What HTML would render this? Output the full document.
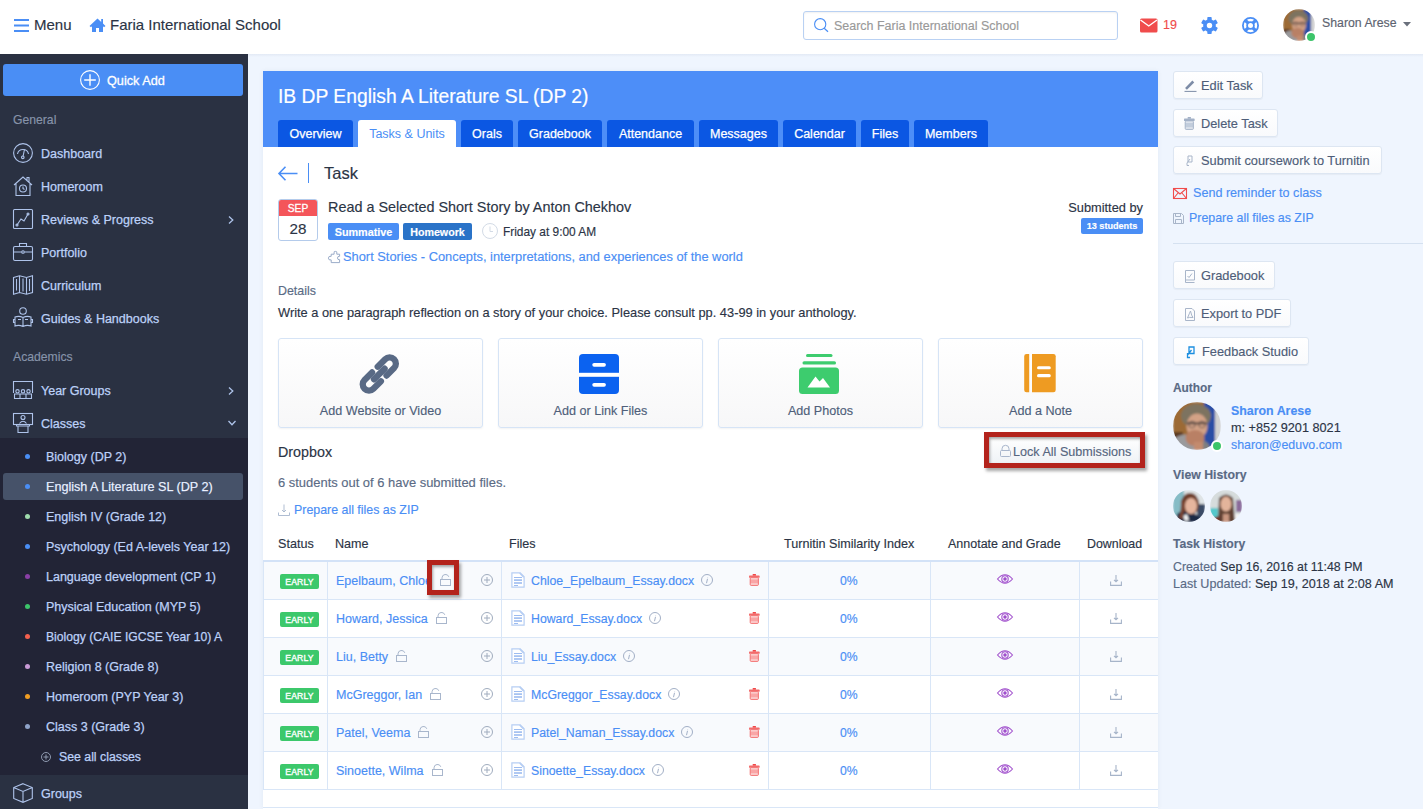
<!DOCTYPE html>
<html><head><meta charset="utf-8">
<style>
*{box-sizing:border-box;margin:0;padding:0}
html,body{width:1423px;height:809px;overflow:hidden;background:#eff5fe;font-family:"Liberation Sans",sans-serif;color:#2b3445;position:relative}
.a{position:absolute}
.t{position:absolute;white-space:nowrap;line-height:1;-webkit-text-stroke:0.15px currentColor}
svg{position:absolute;overflow:visible}
.sl{color:#bdd1f8;font-size:12.5px;-webkit-text-stroke:0.25px #bdd1f8}
.sec{color:#8794aa;font-size:12.2px}
.dot{position:absolute;width:5px;height:5px;border-radius:50%;left:25px}
.tab{position:absolute;top:120px;height:27px;background:#0b57e3;border-radius:3px 3px 0 0;color:#fff;font-size:12.5px;line-height:28px;text-align:center;-webkit-text-stroke:0.25px #fff}
.tab.on{background:#fff;color:#4a8ef5;-webkit-text-stroke:0}
.lnk{color:#4a8ef5}
.tile{position:absolute;top:338px;width:205px;height:90px;border:1px solid #d6e4f6;border-radius:3px;background:linear-gradient(#fff,#f7f7f8);box-shadow:0 1px 2px rgba(0,0,0,.05)}
.tile .t{color:#4f5f7a;font-size:12.6px;width:203px;text-align:center;left:0;top:66px}
.btn{position:absolute;left:1173px;height:28px;border:1px solid #dde6f2;border-radius:3px;background:linear-gradient(#fff,#f9fafc);box-shadow:0 1px 1px rgba(0,0,0,.04)}
.btn .t{color:#4e5d78;font-size:12.8px;top:8px}
.row{position:absolute;left:263px;width:895px;height:38px;border-bottom:1px solid #d9e6f7}
.row.s{background:#f8fafd}
.vl{position:absolute;top:0;width:1px;height:37px;background:#d9e6f7}
.early{position:absolute;left:17px;top:12px;width:39px;height:15px;background:#3cc86b;border-radius:2px;color:#fff;font-size:8.6px;font-weight:400;letter-spacing:0.15px;-webkit-text-stroke:0.35px #fff;text-align:center;line-height:16px}
.row .nm{left:73px;top:13px;font-size:12.5px;color:#4a8ef5}
.row .fn{left:268px;top:13px;font-size:12.3px;color:#4a8ef5}
.row .pc{left:586px;top:13px;font-size:12.2px;color:#4a8ef5;width:0;text-align:center}
</style></head><body>

<svg width="0" height="0" style="position:absolute"><defs>
<filter id="bl" x="-10%" y="-10%" width="120%" height="120%"><feGaussianBlur stdDeviation="1.3"/></filter><filter id="bl2" x="-10%" y="-10%" width="120%" height="120%"><feGaussianBlur stdDeviation="0.8"/></filter><clipPath id="cc"><circle cx="24" cy="24" r="24"/></clipPath>
<clipPath id="cs"><circle cx="16" cy="16" r="16"/></clipPath>
<g id="sharon"><g clip-path="url(#cc)"><g filter="url(#bl)">
<rect x="0" y="0" width="48" height="48" fill="#9c6a34"/>
<rect x="0" y="30" width="10" height="18" fill="#5b3a22"/>
<rect x="31" y="0" width="12" height="48" fill="#2c4ea5"/>
<rect x="42" y="0" width="6" height="48" fill="#d2d2d2"/>
<path d="M2 36 Q10 30 20 34 L26 48 H0 Z" fill="#9a9a9c"/>
<path d="M30 38 Q36 40 38 48 H28 Z" fill="#7f7f80"/>
<ellipse cx="23" cy="14" rx="15" ry="12" fill="#7d7360"/>
<ellipse cx="24" cy="24" rx="10.5" ry="12.5" fill="#d3a286"/>
<path d="M13.5 20 H34 V22.6 H13.5 Z" fill="#3e3534" opacity=".6"/><circle cx="19" cy="22.5" r="3.2" fill="none" stroke="#3e3534" stroke-width="1.2" opacity=".55"/><circle cx="29" cy="22.5" r="3.2" fill="none" stroke="#3e3534" stroke-width="1.2" opacity=".55"/>
<ellipse cx="22" cy="36" rx="9.5" ry="8" fill="#b98065"/>
<rect x="21" y="40" width="9" height="8" fill="#c38b6e"/>
</g></g></g>
<g id="av1"><g clip-path="url(#cs)"><g filter="url(#bl2)">
<rect width="32" height="32" fill="#dfe4e6"/>
<rect width="11" height="26" fill="#86bcc6"/>
<rect x="24" y="14" width="8" height="18" fill="#3a4c66"/>
<ellipse cx="17" cy="14" rx="9" ry="11" fill="#6e3e2a"/>
<path d="M4 24 Q10 18 16 24 Q24 22 28 30 V32 H3 Z" fill="#1e2a44"/>
<ellipse cx="18" cy="16" rx="6" ry="8" fill="#e6b59e"/>
<path d="M10 26 L14 24 L16 30 L12 31 Z" fill="#f2f2f2"/>
<path d="M8 10 Q8 26 5 28 L10 29 Q11 20 12 12 Z" fill="#7a4530"/>
</g></g></g>
<g id="av2"><g clip-path="url(#cs)"><g filter="url(#bl2)">
<rect width="32" height="32" fill="#d6dcdc"/>
<rect y="18" width="8" height="10" fill="#54c7cb"/>
<rect x="26" y="10" width="6" height="12" fill="#8a6a9a"/>
<rect x="22" y="24" width="10" height="8" fill="#f4f4f4"/>
<path d="M9 8 Q16 1 23 8 L25 32 H8 Z" fill="#5e4032"/>
<ellipse cx="16" cy="14" rx="5.5" ry="7.5" fill="#e3b49b"/>
<rect x="13" y="24" width="6" height="8" fill="#c99680"/>
<path d="M3 28 L9 26 L9 32 H3 Z" fill="#7a2a1e"/>
</g></g></g>
</defs></svg>
<!-- HEADER -->
<div class="a" style="left:0;top:0;width:1423px;height:54px;background:#fff"></div>
<div class="a" style="left:248px;top:54px;width:1175px;height:3px;background:linear-gradient(rgba(80,100,140,.08),rgba(80,100,140,0))"></div>
<svg style="left:14px;top:19px" width="15" height="13"><rect x="0" y="0" width="15" height="2" fill="#4a8ef5"/><rect x="0" y="5.5" width="15" height="2" fill="#4a8ef5"/><rect x="0" y="11" width="15" height="2" fill="#4a8ef5"/></svg>
<div class="t" style="left:34px;top:17px;font-size:15px;color:#2b3445">Menu</div>
<svg style="left:89px;top:18px" width="17" height="14" viewBox="0 0 17 14"><path d="M8.5 0.5 L0.5 8 L2 9.2 L3 8.3 V14 H7 V10 H10 V14 H14 V8.3 L15 9.2 L16.5 8 L14 5.6 V1 H12.2 V3.9 Z" fill="#4a8ef5"/></svg>
<div class="t" style="left:110px;top:17px;font-size:15px;color:#2b3445">Faria International School</div>
<div class="a" style="left:803px;top:11px;width:315px;height:29px;border:1px solid #b9d1f3;border-radius:3px;background:#fff;box-shadow:inset 0 1px 2px rgba(0,0,0,.06)"></div>
<svg style="left:814px;top:18px" width="15" height="14" viewBox="0 0 15 14"><circle cx="6.2" cy="6.2" r="5.6" fill="none" stroke="#4a8ef5" stroke-width="1.1"/><path d="M10.2 10.2 L14 13.8" stroke="#4a8ef5" stroke-width="1.2"/></svg>
<div class="t" style="left:834px;top:20px;font-size:12.48px;color:#999">Search Faria International School</div>
<svg style="left:1140px;top:18px" width="18" height="15" viewBox="0 0 18 15"><rect x="0" y="0.5" width="17.5" height="14" rx="1.5" fill="#f04c4c"/><path d="M0.5 2 L8.75 8 L17 2" fill="none" stroke="#fff" stroke-width="1.4"/></svg>
<div class="t" style="left:1163px;top:19px;font-size:12.5px;color:#f04c4c">19</div>
<svg style="left:1201px;top:17px" width="17" height="17" viewBox="0 0 17 17"><g fill="#4a8ef5"><circle cx="8.5" cy="8.5" r="6.3"/><rect x="6.3" y="0" width="4.4" height="17" rx="0.8"/><rect x="6.3" y="0" width="4.4" height="17" rx="0.8" transform="rotate(60 8.5 8.5)"/><rect x="6.3" y="0" width="4.4" height="17" rx="0.8" transform="rotate(120 8.5 8.5)"/></g><circle cx="8.5" cy="8.5" r="2.7" fill="#fff"/></svg>
<svg style="left:1242px;top:17px" width="17" height="17" viewBox="0 0 17 17"><circle cx="8.5" cy="8.5" r="7.6" fill="none" stroke="#4a8ef5" stroke-width="1.8"/><circle cx="8.5" cy="8.5" r="3.4" fill="none" stroke="#4a8ef5" stroke-width="1.8"/><path d="M3.3 3.3 L6.2 6.2 M13.7 3.3 L10.8 6.2 M3.3 13.7 L6.2 10.8 M13.7 13.7 L10.8 10.8" stroke="#4a8ef5" stroke-width="3.3"/></svg>
<svg style="left:1283px;top:9px" width="32" height="32" viewBox="0 0 48 48"><use href="#sharon"/></svg>
<div class="a" style="left:1305px;top:31px;width:12px;height:12px;border-radius:50%;background:#3cc46a;border:2px solid #fff"></div>
<div class="t" style="left:1322px;top:17px;font-size:12.3px;color:#5d6370">Sharon Arese</div>
<svg style="left:1403px;top:22px" width="8" height="5"><path d="M0 0 H8 L4 4.5 Z" fill="#6a707c"/></svg>

<!-- SIDEBAR -->
<div class="a" style="left:0;top:54px;width:248px;height:755px;background:#2a3142"></div>
<div class="a" style="left:3px;top:64px;width:240px;height:32px;background:#4a8ef5;border-radius:3px"></div>
<svg style="left:80px;top:70px" width="20" height="20" viewBox="0 0 20 20"><circle cx="10" cy="10" r="9.4" fill="none" stroke="#fff" stroke-width="1.1"/><path d="M10 4.2 V15.8 M4.2 10 H15.8" stroke="#fff" stroke-width="1.4"/></svg>
<div class="t" style="left:107px;top:75px;font-size:12.7px;color:#fff;-webkit-text-stroke:0.3px #fff">Quick Add</div>
<div class="t sec" style="left:13px;top:114px">General</div>

<svg style="left:13px;top:143px" width="20" height="20" viewBox="0 0 20 20" fill="none" stroke="#aec3ea" stroke-width="1.1"><circle cx="10" cy="10" r="9.4"/><path d="M4.5 11 A5.6 5.6 0 0 1 15.5 11"/><path d="M11.5 6.5 L10 13.5"/><circle cx="9.8" cy="14.3" r="1.3"/></svg>
<div class="t sl" style="left:41px;top:148px">Dashboard</div>
<svg style="left:13px;top:176px" width="20" height="20" viewBox="0 0 20 20" fill="none" stroke="#aec3ea" stroke-width="1.1"><path d="M1 9 L10 1 L19 9 M3 7.5 V19.5 H17 V7.5 M14 4 V1.5 H16 V6"/><circle cx="10" cy="12.5" r="3.5"/><path d="M10 10.5 V12.5 L11.5 13.5"/></svg>
<div class="t sl" style="left:41px;top:181px">Homeroom</div>
<svg style="left:13px;top:209px" width="20" height="20" viewBox="0 0 20 20" fill="none" stroke="#aec3ea" stroke-width="1.1"><rect x="0.5" y="0.5" width="19" height="19" rx="1"/><path d="M4 16 L8 10 L11 12 L15 5"/><circle cx="4" cy="16" r="1"/><circle cx="15" cy="5" r="1"/></svg>
<div class="t sl" style="left:41px;top:214px">Reviews &amp; Progress</div>
<svg style="left:228px;top:216px" width="6" height="8" viewBox="0 0 6 8" fill="none" stroke="#aec3ea" stroke-width="1.3"><path d="M1 0.5 L4.8 4 L1 7.5"/></svg>
<svg style="left:13px;top:242px" width="20" height="20" viewBox="0 0 20 20" fill="none" stroke="#aec3ea" stroke-width="1.1"><rect x="0.5" y="4.5" width="19" height="14" rx="1.5"/><path d="M6.5 4.5 V1.5 H13.5 V4.5 M0.5 10 H8.5 M11.5 10 H19.5"/><circle cx="10" cy="10" r="1.3"/></svg>
<div class="t sl" style="left:41px;top:247px">Portfolio</div>
<svg style="left:13px;top:275px" width="20" height="20" viewBox="0 0 20 20" fill="none" stroke="#aec3ea" stroke-width="1.1"><path d="M0.5 2.5 L6.5 0.8 L13.5 2.5 L19.5 0.8 V17.5 L13.5 19.2 L6.5 17.5 L0.5 19.2 Z M6.5 0.8 V17.5 M13.5 2.5 V19.2 M3.5 4 V15.5 M10 3.5 V16.5 M16.5 4 V16"/></svg>
<div class="t sl" style="left:41px;top:280px">Curriculum</div>
<svg style="left:13px;top:307px" width="20" height="21" viewBox="0 0 20 21" fill="none" stroke="#aec3ea" stroke-width="1.1"><circle cx="10" cy="4" r="3.3"/><path d="M2 10 Q6 8.5 10 10.5 Q14 8.5 18 10 V19 Q14 17.5 10 19.5 Q6 17.5 2 19 Z M10 10.5 V19.5 M2 12.5 H0.5 V15.5 H2 M18 12.5 H19.5 V15.5 H18 M5 12.5 H8 M12 12.5 H15"/></svg>
<div class="t sl" style="left:41px;top:313px">Guides &amp; Handbooks</div>

<div class="t sec" style="left:13px;top:351px">Academics</div>
<svg style="left:13px;top:381px" width="20" height="18" viewBox="0 0 20 18" fill="none" stroke="#aec3ea" stroke-width="1.1"><path d="M0.5 12 V0.5 H19.5 V12"/><circle cx="4.5" cy="10.3" r="1.7"/><circle cx="10" cy="10.3" r="1.7"/><circle cx="15.5" cy="10.3" r="1.7"/><path d="M1.5 13 H18.5 V17.5 H1.5 Z M7 13 V17.5 M13 13 V17.5"/></svg>
<div class="t sl" style="left:41px;top:385px">Year Groups</div>
<svg style="left:228px;top:387px" width="6" height="8" viewBox="0 0 6 8" fill="none" stroke="#aec3ea" stroke-width="1.3"><path d="M1 0.5 L4.8 4 L1 7.5"/></svg>
<svg style="left:13px;top:413px" width="20" height="20" viewBox="0 0 20 20" fill="none" stroke="#aec3ea" stroke-width="1.1"><rect x="0.5" y="0.5" width="19" height="11"/><circle cx="10" cy="4.5" r="2"/><path d="M6.5 10.5 Q10 6 13.5 10.5 M3.5 11.5 H16.5 V13 H3.5 Z M5 13 V19.5 H15 V13"/></svg>
<div class="t sl" style="left:41px;top:418px">Classes</div>
<svg style="left:228px;top:420px" width="8" height="6" viewBox="0 0 8 6" fill="none" stroke="#aec3ea" stroke-width="1.3"><path d="M0.5 1 L4 4.8 L7.5 1"/></svg>

<div class="a" style="left:0;top:438px;width:248px;height:337px;background:#222436"></div>
<div class="a" style="left:3px;top:473px;width:240px;height:27px;background:#465269;border-radius:3px"></div>
<div class="dot" style="top:454px;background:#4a8ef5"></div><div class="t sl" style="left:46px;top:451px">Biology (DP 2)</div>
<div class="dot" style="top:484px;background:#4a8ef5"></div><div class="t sl" style="left:46px;top:481px;color:#fff;font-size:12.6px">English A Literature SL (DP 2)</div>
<div class="dot" style="top:514px;background:#9fdcac"></div><div class="t sl" style="left:46px;top:511px">English IV (Grade 12)</div>
<div class="dot" style="top:544px;background:#4a8ef5"></div><div class="t sl" style="left:46px;top:541px">Psychology (Ed A-levels Year 12)</div>
<div class="dot" style="top:574px;background:#8a3fa6"></div><div class="t sl" style="left:46px;top:571px">Language development (CP 1)</div>
<div class="dot" style="top:604px;background:#3cc46a"></div><div class="t sl" style="left:46px;top:601px">Physical Education (MYP 5)</div>
<div class="dot" style="top:634px;background:#f4604e"></div><div class="t sl" style="left:46px;top:631px;font-size:12.15px">Biology (CAIE IGCSE Year 10) A</div>
<div class="dot" style="top:664px;background:#c99ad6"></div><div class="t sl" style="left:46px;top:661px">Religion 8 (Grade 8)</div>
<div class="dot" style="top:694px;background:#f19d22"></div><div class="t sl" style="left:46px;top:691px">Homeroom (PYP Year 3)</div>
<div class="dot" style="top:724px;background:#8fa3c9"></div><div class="t sl" style="left:46px;top:721px">Class 3 (Grade 3)</div>
<svg style="left:41px;top:752px" width="10" height="10" viewBox="0 0 10 10" fill="none" stroke="#8f9ab0" stroke-width="1"><circle cx="5" cy="5" r="4.5"/><path d="M5 2.5 V7.5 M2.5 5 H7.5"/></svg>
<div class="t sl" style="left:59px;top:751px;font-size:12.3px">See all classes</div>

<svg style="left:13px;top:783px" width="20" height="20" viewBox="0 0 20 20" fill="none" stroke="#aec3ea" stroke-width="1.1"><path d="M10 0.7 L19.3 4.5 V15.5 L10 19.3 L0.7 15.5 V4.5 Z M0.7 4.5 L10 8.5 L19.3 4.5 M10 8.5 V19.3"/></svg>
<div class="t sl" style="left:41px;top:788px">Groups</div>

<!-- CARD -->
<div class="a" style="left:263px;top:71px;width:895px;height:738px;background:#fff;box-shadow:0 0 5px rgba(40,60,100,.06)"></div>
<div class="a" style="left:263px;top:71px;width:895px;height:76px;background:#4d8ef8"></div>
<div class="t" style="left:278px;top:87px;font-size:19.3px;color:#fff;-webkit-text-stroke:0.2px #fff">IB DP English A Literature SL (DP 2)</div>
<div class="tab" style="left:278px;width:75px">Overview</div>
<div class="tab on" style="left:358px;width:98px">Tasks &amp; Units</div>
<div class="tab" style="left:461px;width:52px">Orals</div>
<div class="tab" style="left:518px;width:84px">Gradebook</div>
<div class="tab" style="left:607px;width:87px">Attendance</div>
<div class="tab" style="left:699px;width:79px">Messages</div>
<div class="tab" style="left:783px;width:73px">Calendar</div>
<div class="tab" style="left:861px;width:48px">Files</div>
<div class="tab" style="left:914px;width:74px">Members</div>

<svg style="left:278px;top:166px" width="20" height="15" viewBox="0 0 20 15" fill="none" stroke="#4a8ef5" stroke-width="1.6"><path d="M7.5 0.8 L1 7.5 L7.5 14.2 M1 7.5 H19.5"/></svg>
<div class="a" style="left:308px;top:163px;width:1px;height:20px;background:#4a8ef5"></div>
<div class="t" style="left:324px;top:165px;font-size:16.5px;color:#2b3445">Task</div>

<div class="a" style="left:278px;top:199px;width:40px;height:42px;border:1px solid #b4cbeb;border-radius:3px;background:#fff;overflow:hidden"><div class="a" style="left:-1px;top:-1px;width:40px;height:17px;background:#f4555a"></div></div>
<div class="t" style="left:278px;top:204px;width:40px;text-align:center;font-size:10.2px;color:#fff;-webkit-text-stroke:0.3px #fff">SEP</div>
<div class="t" style="left:278px;top:221px;width:40px;text-align:center;font-size:15.2px;color:#2b3445">28</div>
<div class="t" style="left:328px;top:200px;font-size:14.4px;color:#2b3445">Read a Selected Short Story by Anton Chekhov</div>
<div class="a" style="left:328px;top:223px;width:71px;height:17px;background:#4a8ef5;border-radius:2px"></div>
<div class="t" style="left:328px;top:227px;width:71px;text-align:center;font-size:10.8px;font-weight:700;color:#fff">Summative</div>
<div class="a" style="left:403px;top:223px;width:69px;height:17px;background:#2a73c8;border-radius:2px"></div>
<div class="t" style="left:403px;top:227px;width:69px;text-align:center;font-size:10.7px;font-weight:700;color:#fff">Homework</div>
<svg style="left:482px;top:223px" width="16" height="16" viewBox="0 0 16 16" fill="none" stroke="#d3dbe6" stroke-width="1"><circle cx="8" cy="8" r="7.5"/><path d="M8 3.5 V8.5 H11"/></svg>
<div class="t" style="left:503px;top:227px;font-size:11.9px;color:#2b3445">Friday at 9:00 AM</div>
<svg style="left:328px;top:251px" width="12" height="12" viewBox="0 0 12 12" fill="none" stroke="#8fa3c3" stroke-width="0.9"><path d="M3.2 3.2 H6.1 V1.8 Q5.5 0.4 7.4 0.4 Q9.3 0.4 8.8 1.8 V3.2 H11.6 V5.3 Q9.5 5 9.5 7 Q9.5 9 11.6 8.7 V11.6 H3.2 V8.9 Q0.4 9.5 0.4 7.1 Q0.4 4.8 3.2 5.3 Z"/></svg>
<div class="t" style="left:343px;top:251px;font-size:12.85px;color:#4a8ef5">Short Stories - Concepts, interpretations, and experiences of the world</div>
<div class="t" style="left:1143px;top:202px;font-size:12.8px;color:#2b3445;width:0;direction:rtl">Submitted by</div>
<div class="a" style="left:1081px;top:218px;width:62px;height:16px;background:#4a8ef5;border-radius:2px"></div>
<div class="t" style="left:1081px;top:222px;width:62px;text-align:center;font-size:9.1px;font-weight:700;color:#fff">13 students</div>

<div class="t" style="left:278px;top:285px;font-size:12.4px;color:#5a6b85">Details</div>
<div class="t" style="left:278px;top:307px;font-size:12.83px;color:#2b3445">Write a one paragraph reflection on a story of your choice. Please consult pp. 43-99 in your anthology.</div>

<div class="tile" style="left:278px"><svg style="left:80px;top:15px" width="40" height="40" viewBox="0 0 40 40" fill="none" stroke="#596a85" stroke-width="6.3" stroke-linecap="round"><g transform="translate(20.3 20) rotate(-45)"><path d="M4 -6.25 H14.6 A6.25 6.25 0 0 1 14.6 6.25 H4"/><path d="M-4 6.25 H-14.6 A6.25 6.25 0 0 1 -14.6 -6.25 H-4"/><path d="M-7.5 0 H7.5"/></g></svg><div class="t">Add Website or Video</div></div>
<div class="tile" style="left:498px"><svg style="left:80px;top:15px" width="40" height="40" viewBox="0 0 40 40"><rect x="0" y="0" width="40" height="40" rx="4" fill="#0b62f0"/><rect x="0" y="18.8" width="40" height="4" fill="#fff"/><rect x="13.3" y="9" width="13.6" height="3.7" rx="1.85" fill="#fff"/><rect x="13.3" y="29" width="13.6" height="3.7" rx="1.85" fill="#fff"/></svg><div class="t">Add or Link Files</div></div>
<div class="tile" style="left:718px"><svg style="left:80px;top:15px" width="40" height="40" viewBox="0 0 40 40"><rect x="7" y="0" width="26.5" height="3" rx="1.5" fill="#3dcc6e"/><rect x="3.5" y="7.2" width="33.5" height="3.3" rx="1.6" fill="#3dcc6e"/><rect x="0" y="13.5" width="40" height="26.5" rx="3.5" fill="#3dcc6e"/><path d="M8.5 33.5 L16.5 22.5 L20.5 27.5 L24 24 L31 33.5 Z" fill="#fff"/></svg><div class="t">Add Photos</div></div>
<div class="tile" style="left:938px"><svg style="left:84px;top:15px" width="34" height="40" viewBox="0 0 34 40"><path d="M3.5 0 H6.2 V38.3 H3.5 A2.3 2.3 0 0 1 1.2 36 V2.3 A2.3 2.3 0 0 1 3.5 0 Z" fill="#ee9b22"/><path d="M9 0 H30.4 A2.3 2.3 0 0 1 32.7 2.3 V36 A2.3 2.3 0 0 1 30.4 38.3 H9 Z" fill="#ee9b22"/><rect x="14" y="12.3" width="13.8" height="3" rx="1.5" fill="#fff"/><rect x="14" y="20.1" width="13.8" height="3.2" rx="1.6" fill="#fff"/></svg><div class="t">Add a Note</div></div>

<div class="t" style="left:278px;top:445px;font-size:14.3px;color:#2b3445">Dropbox</div>
<div class="a" style="left:988px;top:436px;width:153px;height:28px;border:1px solid #dde6f2;border-radius:3px;background:linear-gradient(#fff,#eff2f6)"></div>
<svg style="left:1000px;top:445px" width="11" height="12" viewBox="0 0 11 12" fill="none" stroke="#a8b6cc" stroke-width="1"><path d="M2 5.5 V3.8 A3.5 3.5 0 0 1 9 3.8 V5.5"/><rect x="0.5" y="5.5" width="10" height="6" rx="1"/></svg>
<div class="t" style="left:1013px;top:446px;font-size:12.6px;color:#56667f">Lock All Submissions</div>
<div class="a" style="left:984px;top:432px;width:161px;height:36px;border:5px solid #b3231c;box-shadow:2px 3px 3px rgba(0,0,0,.35), inset 1px 2px 3px rgba(0,0,0,.35)"></div>

<div class="t" style="left:278px;top:477px;font-size:12.94px;color:#5b6b85">6 students out of 6 have submitted files.</div>
<svg style="left:278px;top:504px" width="12" height="12" viewBox="0 0 12 12" fill="none" stroke="#a6b6cd" stroke-width="0.9"><path d="M6 0.5 V8 M4 6 L6 8 L8 6 M0.5 8.5 V11.5 H11.5 V8.5"/></svg>
<div class="t" style="left:294px;top:504px;font-size:12.4px;color:#4a8ef5">Prepare all files as ZIP</div>

<div class="t" style="left:278px;top:538px;font-size:12.6px;color:#2b3445">Status</div>
<div class="t" style="left:335px;top:538px;font-size:12.6px;color:#2b3445">Name</div>
<div class="t" style="left:509px;top:538px;font-size:12.6px;color:#2b3445">Files</div>
<div class="t" style="left:784px;top:538px;font-size:12.6px;color:#2b3445">Turnitin Similarity Index</div>
<div class="t" style="left:948px;top:538px;font-size:12.5px;color:#2b3445">Annotate and Grade</div>
<div class="t" style="left:1087px;top:538px;font-size:12.4px;color:#2b3445">Download</div>
<div class="a" style="left:263px;top:560px;width:895px;height:2px;background:#d3e2f7"></div>

<div class="row s" style="top:562px">
<div class="vl" style="left:0"></div><div class="vl" style="left:64px"></div><div class="vl" style="left:238px"></div><div class="vl" style="left:505px"></div><div class="vl" style="left:667px"></div><div class="vl" style="left:816px"></div>
<div class="early">EARLY</div>
<div class="t nm">Epelbaum, Chloe</div>
<svg style="left:177px;top:12px" width="11" height="12" viewBox="0 0 11 12" fill="none" stroke="#a8b6cc" stroke-width="1"><path d="M2 5.5 V3.8 A3.5 3.5 0 0 1 8.8 2.8"/><rect x="0.5" y="5.5" width="10" height="6"/></svg>
<svg style="left:218px;top:12px" width="12" height="12" viewBox="0 0 12 12" fill="none" stroke="#a0acbe" stroke-width="1"><circle cx="6" cy="6" r="5.5"/><path d="M6 3 V9 M3 6 H9"/></svg>
<svg style="left:248px;top:10px" width="14" height="16" viewBox="0 0 14 16"><path d="M0.9 0.9 H9.2 L13.1 4.8 V15.1 H0.9 Z" fill="#fff" stroke="#b6cef3" stroke-width="1.2"/><path d="M8.6 1 L12.8 5.2" stroke="#b6cef3" stroke-width="1.4"/><rect x="3" y="5" width="8" height="1" fill="#9dbcf0"/><rect x="3" y="7.3" width="8" height="1.6" fill="#9dbcf0"/><rect x="3" y="10.2" width="8" height="1.6" fill="#9dbcf0"/><rect x="3" y="13" width="4" height="1" fill="#9dbcf0"/></svg>
<div class="t fn">Chloe_Epelbaum_Essay.docx</div>
<svg style="left:438px;top:12px" width="12" height="12" viewBox="0 0 12 12" fill="none" stroke="#97a6bf" stroke-width="0.9"><circle cx="6" cy="6" r="5.5"/><path d="M6.5 4.8 L5.5 9.2 M6.6 3 V3.3"/></svg>
<svg style="left:486px;top:12px" width="11" height="12" viewBox="0 0 11 12"><rect x="3.6" y="0" width="3.4" height="1.8" rx="0.5" fill="#f04848"/><rect x="0" y="1.6" width="10.6" height="2.2" rx="0.6" fill="#f26b6b"/><rect x="1.2" y="3.8" width="8.2" height="7.6" rx="1" fill="#f9a6a6" stroke="#f26a6a" stroke-width="0.9"/><rect x="1.8" y="4.4" width="7" height="0.9" fill="#fff" opacity=".85"/><rect x="1.8" y="9.6" width="7" height="0.9" fill="#fff" opacity=".85"/></svg>
<div class="t pc" style="left:586px;width:0"><span style="position:absolute;left:-9px">0%</span></div>
<svg style="left:734px;top:11px" width="16" height="12" viewBox="0 0 16 12" fill="none" stroke="#a04fcc" stroke-width="1.1"><path d="M0.5 6 Q8 -2.5 15.5 6 Q8 14.5 0.5 6 Z"/><circle cx="8" cy="6" r="3.2"/><circle cx="8" cy="6" r="1.2" fill="#a04fcc"/></svg>
<svg style="left:847px;top:13px" width="12" height="11" viewBox="0 0 12 11" fill="none" stroke="#a6b4c9" stroke-width="1.1"><path d="M6 0 V6.8 M4 4.8 L6 6.8 L8 4.8 M0.6 6.5 V10.4 H11.4 V6.5"/></svg>
</div>
<div class="row" style="top:600px">
<div class="vl" style="left:0"></div><div class="vl" style="left:64px"></div><div class="vl" style="left:238px"></div><div class="vl" style="left:505px"></div><div class="vl" style="left:667px"></div><div class="vl" style="left:816px"></div>
<div class="early">EARLY</div>
<div class="t nm">Howard, Jessica</div>
<svg style="left:173px;top:12px" width="11" height="12" viewBox="0 0 11 12" fill="none" stroke="#a8b6cc" stroke-width="1"><path d="M2 5.5 V3.8 A3.5 3.5 0 0 1 8.8 2.8"/><rect x="0.5" y="5.5" width="10" height="6"/></svg>
<svg style="left:218px;top:12px" width="12" height="12" viewBox="0 0 12 12" fill="none" stroke="#a0acbe" stroke-width="1"><circle cx="6" cy="6" r="5.5"/><path d="M6 3 V9 M3 6 H9"/></svg>
<svg style="left:248px;top:10px" width="14" height="16" viewBox="0 0 14 16"><path d="M0.9 0.9 H9.2 L13.1 4.8 V15.1 H0.9 Z" fill="#fff" stroke="#b6cef3" stroke-width="1.2"/><path d="M8.6 1 L12.8 5.2" stroke="#b6cef3" stroke-width="1.4"/><rect x="3" y="5" width="8" height="1" fill="#9dbcf0"/><rect x="3" y="7.3" width="8" height="1.6" fill="#9dbcf0"/><rect x="3" y="10.2" width="8" height="1.6" fill="#9dbcf0"/><rect x="3" y="13" width="4" height="1" fill="#9dbcf0"/></svg>
<div class="t fn">Howard_Essay.docx</div>
<svg style="left:386px;top:12px" width="12" height="12" viewBox="0 0 12 12" fill="none" stroke="#97a6bf" stroke-width="0.9"><circle cx="6" cy="6" r="5.5"/><path d="M6.5 4.8 L5.5 9.2 M6.6 3 V3.3"/></svg>
<svg style="left:486px;top:12px" width="11" height="12" viewBox="0 0 11 12"><rect x="3.6" y="0" width="3.4" height="1.8" rx="0.5" fill="#f04848"/><rect x="0" y="1.6" width="10.6" height="2.2" rx="0.6" fill="#f26b6b"/><rect x="1.2" y="3.8" width="8.2" height="7.6" rx="1" fill="#f9a6a6" stroke="#f26a6a" stroke-width="0.9"/><rect x="1.8" y="4.4" width="7" height="0.9" fill="#fff" opacity=".85"/><rect x="1.8" y="9.6" width="7" height="0.9" fill="#fff" opacity=".85"/></svg>
<div class="t pc" style="left:586px;width:0"><span style="position:absolute;left:-9px">0%</span></div>
<svg style="left:734px;top:11px" width="16" height="12" viewBox="0 0 16 12" fill="none" stroke="#a04fcc" stroke-width="1.1"><path d="M0.5 6 Q8 -2.5 15.5 6 Q8 14.5 0.5 6 Z"/><circle cx="8" cy="6" r="3.2"/><circle cx="8" cy="6" r="1.2" fill="#a04fcc"/></svg>
<svg style="left:847px;top:13px" width="12" height="11" viewBox="0 0 12 11" fill="none" stroke="#a6b4c9" stroke-width="1.1"><path d="M6 0 V6.8 M4 4.8 L6 6.8 L8 4.8 M0.6 6.5 V10.4 H11.4 V6.5"/></svg>
</div>
<div class="row s" style="top:638px">
<div class="vl" style="left:0"></div><div class="vl" style="left:64px"></div><div class="vl" style="left:238px"></div><div class="vl" style="left:505px"></div><div class="vl" style="left:667px"></div><div class="vl" style="left:816px"></div>
<div class="early">EARLY</div>
<div class="t nm">Liu, Betty</div>
<svg style="left:133px;top:12px" width="11" height="12" viewBox="0 0 11 12" fill="none" stroke="#a8b6cc" stroke-width="1"><path d="M2 5.5 V3.8 A3.5 3.5 0 0 1 8.8 2.8"/><rect x="0.5" y="5.5" width="10" height="6"/></svg>
<svg style="left:218px;top:12px" width="12" height="12" viewBox="0 0 12 12" fill="none" stroke="#a0acbe" stroke-width="1"><circle cx="6" cy="6" r="5.5"/><path d="M6 3 V9 M3 6 H9"/></svg>
<svg style="left:248px;top:10px" width="14" height="16" viewBox="0 0 14 16"><path d="M0.9 0.9 H9.2 L13.1 4.8 V15.1 H0.9 Z" fill="#fff" stroke="#b6cef3" stroke-width="1.2"/><path d="M8.6 1 L12.8 5.2" stroke="#b6cef3" stroke-width="1.4"/><rect x="3" y="5" width="8" height="1" fill="#9dbcf0"/><rect x="3" y="7.3" width="8" height="1.6" fill="#9dbcf0"/><rect x="3" y="10.2" width="8" height="1.6" fill="#9dbcf0"/><rect x="3" y="13" width="4" height="1" fill="#9dbcf0"/></svg>
<div class="t fn">Liu_Essay.docx</div>
<svg style="left:360px;top:12px" width="12" height="12" viewBox="0 0 12 12" fill="none" stroke="#97a6bf" stroke-width="0.9"><circle cx="6" cy="6" r="5.5"/><path d="M6.5 4.8 L5.5 9.2 M6.6 3 V3.3"/></svg>
<svg style="left:486px;top:12px" width="11" height="12" viewBox="0 0 11 12"><rect x="3.6" y="0" width="3.4" height="1.8" rx="0.5" fill="#f04848"/><rect x="0" y="1.6" width="10.6" height="2.2" rx="0.6" fill="#f26b6b"/><rect x="1.2" y="3.8" width="8.2" height="7.6" rx="1" fill="#f9a6a6" stroke="#f26a6a" stroke-width="0.9"/><rect x="1.8" y="4.4" width="7" height="0.9" fill="#fff" opacity=".85"/><rect x="1.8" y="9.6" width="7" height="0.9" fill="#fff" opacity=".85"/></svg>
<div class="t pc" style="left:586px;width:0"><span style="position:absolute;left:-9px">0%</span></div>
<svg style="left:734px;top:11px" width="16" height="12" viewBox="0 0 16 12" fill="none" stroke="#a04fcc" stroke-width="1.1"><path d="M0.5 6 Q8 -2.5 15.5 6 Q8 14.5 0.5 6 Z"/><circle cx="8" cy="6" r="3.2"/><circle cx="8" cy="6" r="1.2" fill="#a04fcc"/></svg>
<svg style="left:847px;top:13px" width="12" height="11" viewBox="0 0 12 11" fill="none" stroke="#a6b4c9" stroke-width="1.1"><path d="M6 0 V6.8 M4 4.8 L6 6.8 L8 4.8 M0.6 6.5 V10.4 H11.4 V6.5"/></svg>
</div>
<div class="row" style="top:676px">
<div class="vl" style="left:0"></div><div class="vl" style="left:64px"></div><div class="vl" style="left:238px"></div><div class="vl" style="left:505px"></div><div class="vl" style="left:667px"></div><div class="vl" style="left:816px"></div>
<div class="early">EARLY</div>
<div class="t nm">McGreggor, Ian</div>
<svg style="left:167px;top:12px" width="11" height="12" viewBox="0 0 11 12" fill="none" stroke="#a8b6cc" stroke-width="1"><path d="M2 5.5 V3.8 A3.5 3.5 0 0 1 8.8 2.8"/><rect x="0.5" y="5.5" width="10" height="6"/></svg>
<svg style="left:218px;top:12px" width="12" height="12" viewBox="0 0 12 12" fill="none" stroke="#a0acbe" stroke-width="1"><circle cx="6" cy="6" r="5.5"/><path d="M6 3 V9 M3 6 H9"/></svg>
<svg style="left:248px;top:10px" width="14" height="16" viewBox="0 0 14 16"><path d="M0.9 0.9 H9.2 L13.1 4.8 V15.1 H0.9 Z" fill="#fff" stroke="#b6cef3" stroke-width="1.2"/><path d="M8.6 1 L12.8 5.2" stroke="#b6cef3" stroke-width="1.4"/><rect x="3" y="5" width="8" height="1" fill="#9dbcf0"/><rect x="3" y="7.3" width="8" height="1.6" fill="#9dbcf0"/><rect x="3" y="10.2" width="8" height="1.6" fill="#9dbcf0"/><rect x="3" y="13" width="4" height="1" fill="#9dbcf0"/></svg>
<div class="t fn">McGreggor_Essay.docx</div>
<svg style="left:405px;top:12px" width="12" height="12" viewBox="0 0 12 12" fill="none" stroke="#97a6bf" stroke-width="0.9"><circle cx="6" cy="6" r="5.5"/><path d="M6.5 4.8 L5.5 9.2 M6.6 3 V3.3"/></svg>
<svg style="left:486px;top:12px" width="11" height="12" viewBox="0 0 11 12"><rect x="3.6" y="0" width="3.4" height="1.8" rx="0.5" fill="#f04848"/><rect x="0" y="1.6" width="10.6" height="2.2" rx="0.6" fill="#f26b6b"/><rect x="1.2" y="3.8" width="8.2" height="7.6" rx="1" fill="#f9a6a6" stroke="#f26a6a" stroke-width="0.9"/><rect x="1.8" y="4.4" width="7" height="0.9" fill="#fff" opacity=".85"/><rect x="1.8" y="9.6" width="7" height="0.9" fill="#fff" opacity=".85"/></svg>
<div class="t pc" style="left:586px;width:0"><span style="position:absolute;left:-9px">0%</span></div>
<svg style="left:734px;top:11px" width="16" height="12" viewBox="0 0 16 12" fill="none" stroke="#a04fcc" stroke-width="1.1"><path d="M0.5 6 Q8 -2.5 15.5 6 Q8 14.5 0.5 6 Z"/><circle cx="8" cy="6" r="3.2"/><circle cx="8" cy="6" r="1.2" fill="#a04fcc"/></svg>
<svg style="left:847px;top:13px" width="12" height="11" viewBox="0 0 12 11" fill="none" stroke="#a6b4c9" stroke-width="1.1"><path d="M6 0 V6.8 M4 4.8 L6 6.8 L8 4.8 M0.6 6.5 V10.4 H11.4 V6.5"/></svg>
</div>
<div class="row s" style="top:714px">
<div class="vl" style="left:0"></div><div class="vl" style="left:64px"></div><div class="vl" style="left:238px"></div><div class="vl" style="left:505px"></div><div class="vl" style="left:667px"></div><div class="vl" style="left:816px"></div>
<div class="early">EARLY</div>
<div class="t nm">Patel, Veema</div>
<svg style="left:155px;top:12px" width="11" height="12" viewBox="0 0 11 12" fill="none" stroke="#a8b6cc" stroke-width="1"><path d="M2 5.5 V3.8 A3.5 3.5 0 0 1 8.8 2.8"/><rect x="0.5" y="5.5" width="10" height="6"/></svg>
<svg style="left:218px;top:12px" width="12" height="12" viewBox="0 0 12 12" fill="none" stroke="#a0acbe" stroke-width="1"><circle cx="6" cy="6" r="5.5"/><path d="M6 3 V9 M3 6 H9"/></svg>
<svg style="left:248px;top:10px" width="14" height="16" viewBox="0 0 14 16"><path d="M0.9 0.9 H9.2 L13.1 4.8 V15.1 H0.9 Z" fill="#fff" stroke="#b6cef3" stroke-width="1.2"/><path d="M8.6 1 L12.8 5.2" stroke="#b6cef3" stroke-width="1.4"/><rect x="3" y="5" width="8" height="1" fill="#9dbcf0"/><rect x="3" y="7.3" width="8" height="1.6" fill="#9dbcf0"/><rect x="3" y="10.2" width="8" height="1.6" fill="#9dbcf0"/><rect x="3" y="13" width="4" height="1" fill="#9dbcf0"/></svg>
<div class="t fn">Patel_Naman_Essay.docx</div>
<svg style="left:418px;top:12px" width="12" height="12" viewBox="0 0 12 12" fill="none" stroke="#97a6bf" stroke-width="0.9"><circle cx="6" cy="6" r="5.5"/><path d="M6.5 4.8 L5.5 9.2 M6.6 3 V3.3"/></svg>
<svg style="left:486px;top:12px" width="11" height="12" viewBox="0 0 11 12"><rect x="3.6" y="0" width="3.4" height="1.8" rx="0.5" fill="#f04848"/><rect x="0" y="1.6" width="10.6" height="2.2" rx="0.6" fill="#f26b6b"/><rect x="1.2" y="3.8" width="8.2" height="7.6" rx="1" fill="#f9a6a6" stroke="#f26a6a" stroke-width="0.9"/><rect x="1.8" y="4.4" width="7" height="0.9" fill="#fff" opacity=".85"/><rect x="1.8" y="9.6" width="7" height="0.9" fill="#fff" opacity=".85"/></svg>
<div class="t pc" style="left:586px;width:0"><span style="position:absolute;left:-9px">0%</span></div>
<svg style="left:734px;top:11px" width="16" height="12" viewBox="0 0 16 12" fill="none" stroke="#a04fcc" stroke-width="1.1"><path d="M0.5 6 Q8 -2.5 15.5 6 Q8 14.5 0.5 6 Z"/><circle cx="8" cy="6" r="3.2"/><circle cx="8" cy="6" r="1.2" fill="#a04fcc"/></svg>
<svg style="left:847px;top:13px" width="12" height="11" viewBox="0 0 12 11" fill="none" stroke="#a6b4c9" stroke-width="1.1"><path d="M6 0 V6.8 M4 4.8 L6 6.8 L8 4.8 M0.6 6.5 V10.4 H11.4 V6.5"/></svg>
</div>
<div class="row" style="top:752px">
<div class="vl" style="left:0"></div><div class="vl" style="left:64px"></div><div class="vl" style="left:238px"></div><div class="vl" style="left:505px"></div><div class="vl" style="left:667px"></div><div class="vl" style="left:816px"></div>
<div class="early">EARLY</div>
<div class="t nm">Sinoette, Wilma</div>
<svg style="left:169px;top:12px" width="11" height="12" viewBox="0 0 11 12" fill="none" stroke="#a8b6cc" stroke-width="1"><path d="M2 5.5 V3.8 A3.5 3.5 0 0 1 8.8 2.8"/><rect x="0.5" y="5.5" width="10" height="6"/></svg>
<svg style="left:218px;top:12px" width="12" height="12" viewBox="0 0 12 12" fill="none" stroke="#a0acbe" stroke-width="1"><circle cx="6" cy="6" r="5.5"/><path d="M6 3 V9 M3 6 H9"/></svg>
<svg style="left:248px;top:10px" width="14" height="16" viewBox="0 0 14 16"><path d="M0.9 0.9 H9.2 L13.1 4.8 V15.1 H0.9 Z" fill="#fff" stroke="#b6cef3" stroke-width="1.2"/><path d="M8.6 1 L12.8 5.2" stroke="#b6cef3" stroke-width="1.4"/><rect x="3" y="5" width="8" height="1" fill="#9dbcf0"/><rect x="3" y="7.3" width="8" height="1.6" fill="#9dbcf0"/><rect x="3" y="10.2" width="8" height="1.6" fill="#9dbcf0"/><rect x="3" y="13" width="4" height="1" fill="#9dbcf0"/></svg>
<div class="t fn">Sinoette_Essay.docx</div>
<svg style="left:389px;top:12px" width="12" height="12" viewBox="0 0 12 12" fill="none" stroke="#97a6bf" stroke-width="0.9"><circle cx="6" cy="6" r="5.5"/><path d="M6.5 4.8 L5.5 9.2 M6.6 3 V3.3"/></svg>
<svg style="left:486px;top:12px" width="11" height="12" viewBox="0 0 11 12"><rect x="3.6" y="0" width="3.4" height="1.8" rx="0.5" fill="#f04848"/><rect x="0" y="1.6" width="10.6" height="2.2" rx="0.6" fill="#f26b6b"/><rect x="1.2" y="3.8" width="8.2" height="7.6" rx="1" fill="#f9a6a6" stroke="#f26a6a" stroke-width="0.9"/><rect x="1.8" y="4.4" width="7" height="0.9" fill="#fff" opacity=".85"/><rect x="1.8" y="9.6" width="7" height="0.9" fill="#fff" opacity=".85"/></svg>
<div class="t pc" style="left:586px;width:0"><span style="position:absolute;left:-9px">0%</span></div>
<svg style="left:734px;top:11px" width="16" height="12" viewBox="0 0 16 12" fill="none" stroke="#a04fcc" stroke-width="1.1"><path d="M0.5 6 Q8 -2.5 15.5 6 Q8 14.5 0.5 6 Z"/><circle cx="8" cy="6" r="3.2"/><circle cx="8" cy="6" r="1.2" fill="#a04fcc"/></svg>
<svg style="left:847px;top:13px" width="12" height="11" viewBox="0 0 12 11" fill="none" stroke="#a6b4c9" stroke-width="1.1"><path d="M6 0 V6.8 M4 4.8 L6 6.8 L8 4.8 M0.6 6.5 V10.4 H11.4 V6.5"/></svg>
</div>
<div class="a" style="left:263px;top:790px;width:895px;height:18px;border-bottom:1px solid #d9e6f7"></div>

<div class="a" style="left:427px;top:560px;width:32px;height:35px;border:5px solid #b3231c;box-shadow:2px 3px 3px rgba(0,0,0,.35), inset 1px 2px 3px rgba(0,0,0,.35)"></div>
<!-- RIGHT PANEL -->
<div class="btn" style="top:71px;width:90px"><svg style="left:10px;top:7px" width="13" height="13" viewBox="0 0 13 13" fill="none" stroke="#7d8ca6"><path d="M2 9.8 L9.3 2.5" stroke-width="2.6"/><path d="M0.5 12.4 H12.5" stroke-width="1"/></svg><div class="t" style="left:27px">Edit Task</div></div>
<div class="btn" style="top:109px;width:105px"><svg style="left:10px;top:7px" width="11" height="13" viewBox="0 0 11 13"><rect x="3.6" y="0" width="3.4" height="1.8" rx="0.5" fill="#a3b1c7"/><rect x="0" y="1.6" width="10.6" height="2.4" rx="0.6" fill="#a3b1c7"/><rect x="1.2" y="4" width="8.2" height="8.4" rx="1" fill="#c2cddc" stroke="#a3b1c7" stroke-width="0.9"/><rect x="1.8" y="4.6" width="7" height="0.9" fill="#fff" opacity=".85"/><rect x="1.8" y="10.6" width="7" height="0.9" fill="#fff" opacity=".85"/></svg><div class="t" style="left:27px">Delete Task</div></div>
<div class="btn" style="top:146px;width:209px"><svg style="left:10px;top:8px" width="12" height="12" viewBox="0 0 12 12" fill="none" stroke="#a8b5c9" stroke-width="1"><path d="M4 1 H8 V7 H4 Z M6 4 L3 8 M3 8 V10.5 H5"/></svg><div class="t" style="left:27px">Submit coursework to Turnitin</div></div>
<svg style="left:1173px;top:188px" width="14" height="11" viewBox="0 0 14 11" fill="none" stroke="#f04c4c" stroke-width="1.1"><rect x="0.5" y="0.5" width="13" height="10"/><path d="M0.5 0.5 L7 6 L13.5 0.5 M0.5 10.5 L5 5 M13.5 10.5 L9 5"/></svg>
<div class="t" style="left:1193px;top:187px;font-size:12.6px;color:#4a8ef5">Send reminder to class</div>
<svg style="left:1173px;top:213px" width="11" height="11" viewBox="0 0 11 11" fill="none" stroke="#a8b5c9" stroke-width="1"><path d="M0.5 0.5 H8.5 L10.5 2.5 V10.5 H0.5 Z M2.5 0.5 V3.5 H7.5 V0.5 M2.5 10.5 V6.5 H8.5 V10.5"/></svg>
<div class="t" style="left:1189px;top:212px;font-size:12.4px;color:#4a8ef5">Prepare all files as ZIP</div>
<div class="a" style="left:1173px;top:243px;width:250px;height:1px;background:#d5e1f0"></div>
<div class="btn" style="top:261px;width:102px"><svg style="left:10px;top:8px" width="12" height="13" viewBox="0 0 12 13" fill="none" stroke="#a8b5c9" stroke-width="1"><path d="M1.5 0.5 H10.5 V10 H1.5 Z M1.5 10 V12.5 H10.5 M3.5 6 L5 7.5 L8 3.5"/></svg><div class="t" style="left:27px">Gradebook</div></div>
<div class="btn" style="top:299px;width:118px"><svg style="left:10px;top:8px" width="12" height="13" viewBox="0 0 12 13" fill="none" stroke="#a8b5c9" stroke-width="1"><path d="M1.5 0.5 H8 L10.5 3 V12.5 H1.5 Z M3.5 10 Q6 4 6.5 3 Q7.5 8 9 9.5 Q5 9 3.5 10"/></svg><div class="t" style="left:27px">Export to PDF</div></div>
<div class="btn" style="top:337px;width:136px"><svg style="left:11px;top:8px" width="12" height="13" viewBox="0 0 12 13" fill="none" stroke="#1d8fe0" stroke-width="1.3"><path d="M4 1 H9 V7.5 H4 Z M6.5 4 L2.5 9 M2.5 7 V11.5 H5"/></svg><div class="t" style="left:28px">Feedback Studio</div></div>

<div class="t" style="left:1173px;top:383px;font-size:11.9px;font-weight:700;color:#5a6a85">Author</div>
<svg style="left:1173px;top:402px" width="48" height="48" viewBox="0 0 48 48"><use href="#sharon"/></svg>
<div class="a" style="left:1211px;top:440px;width:12px;height:12px;border-radius:50%;background:#3cc46a;border:2px solid #fff"></div>
<div class="t" style="left:1231px;top:405px;font-size:12.4px;font-weight:700;color:#4a8ef5">Sharon Arese</div>
<div class="t" style="left:1231px;top:422px;font-size:12.7px;color:#2b3445">m: +852 9201 8021</div>
<div class="t" style="left:1231px;top:439px;font-size:12.4px;color:#4a8ef5">sharon@eduvo.com</div>
<div class="t" style="left:1173px;top:469px;font-size:12.3px;font-weight:700;color:#5a6a85">View History</div>
<svg style="left:1173px;top:490px" width="32" height="32" viewBox="0 0 32 32"><use href="#av1"/></svg>
<svg style="left:1210px;top:490px" width="32" height="32" viewBox="0 0 32 32"><use href="#av2"/></svg>
<div class="t" style="left:1173px;top:538px;font-size:12.2px;font-weight:700;color:#5a6a85">Task History</div>
<div class="t" style="left:1173px;top:561px;font-size:12.33px;color:#5a6a85">Created <span style="color:#2b3445">Sep 16, 2016 at 11:48 PM</span></div>
<div class="t" style="left:1173px;top:578px;font-size:12.6px;color:#5a6a85">Last Updated: <span style="color:#2b3445">Sep 19, 2018 at 2:08 AM</span></div>

</body></html>
